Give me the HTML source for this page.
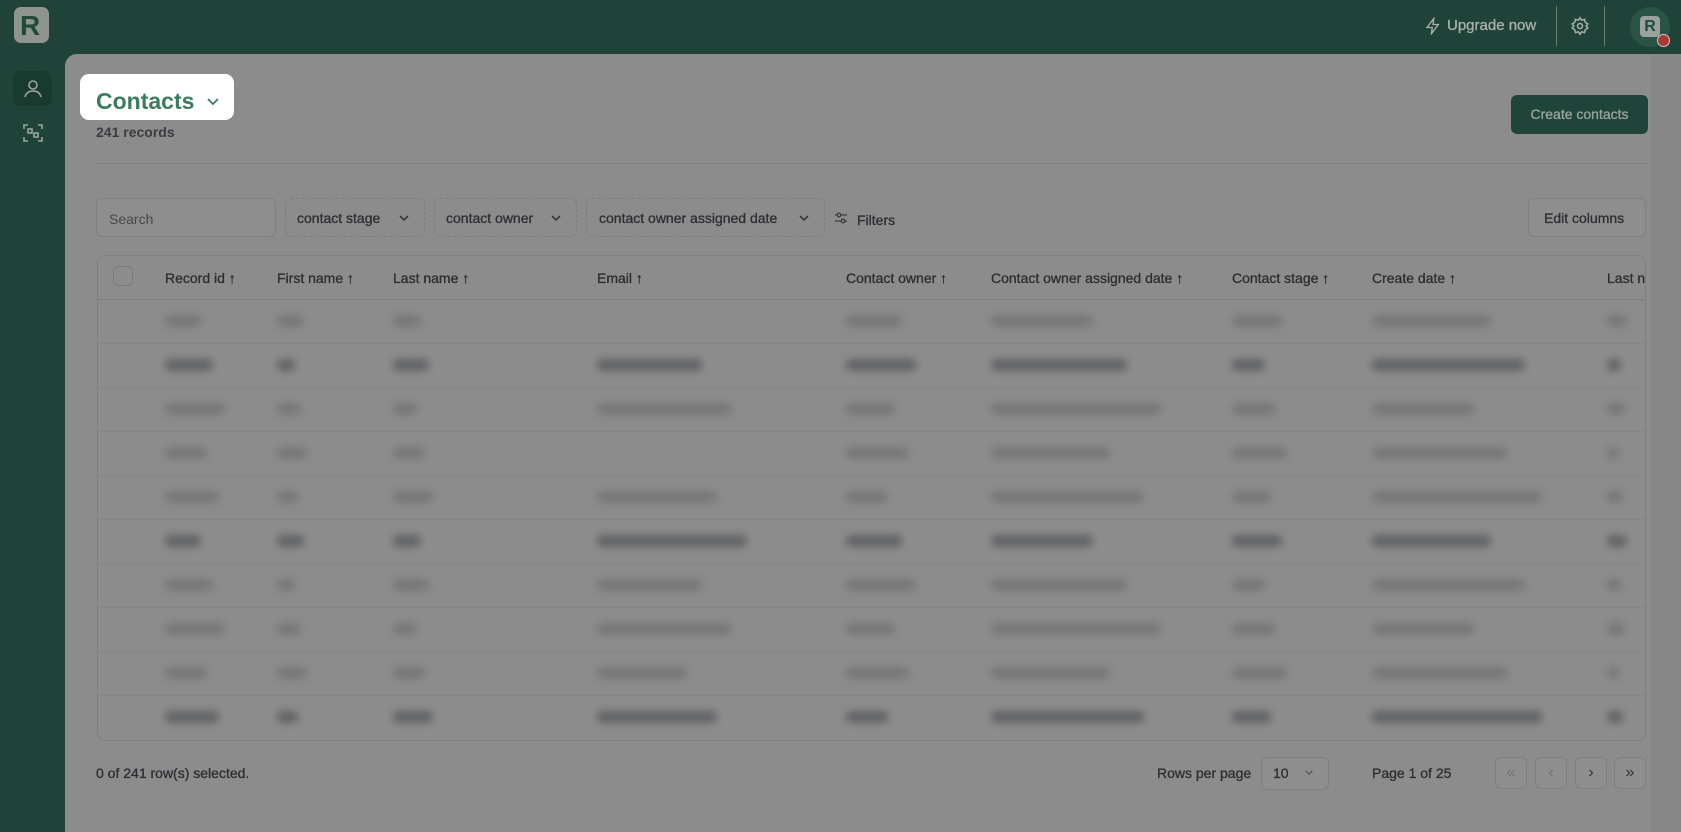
<!DOCTYPE html>
<html><head><meta charset="utf-8"><style>
*{box-sizing:border-box;margin:0;padding:0}
body{width:1681px;height:832px;overflow:hidden;background:#1f4338;font-family:"Liberation Sans",sans-serif;position:relative}
.abs{position:absolute}
.panel{left:65px;top:54px;width:1616px;height:778px;background:#8c8c8c;border-top-left-radius:12px}
.txt{color:#2b2e32;font-size:14px;white-space:nowrap;-webkit-text-stroke:0.3px #2b2e32}
.btn{border:1px solid #7f7f7f;border-radius:6px;background:#8e8e8e}
.dash{border:1px dashed #7d7d7d;border-radius:6px}
.hd{position:absolute;top:270px;font-size:14px;color:#2a2d31;white-space:nowrap;-webkit-text-stroke:0.3px #2a2d31}
</style></head><body>
<div class="abs" style="left:14px;top:7px;width:35px;height:36px;background:#8f9491;border-radius:7px"></div>
<div class="abs" style="left:20px;top:10px;font:bold 28px 'Liberation Sans',sans-serif;color:#1f4a38">R</div>
<div class="abs" style="left:13px;top:71px;width:39px;height:35px;background:#183a2f;border-radius:8px"></div>
<svg class="abs" style="left:21px;top:77px" width="24" height="24" viewBox="0 0 24 24" fill="none" stroke="#9aa59f" stroke-width="1.6"><circle cx="12" cy="8" r="4"/><path d="M4 20c1-4 4-6 8-6s7 2 8 6"/></svg>
<svg class="abs" style="left:21px;top:121px" width="24" height="24" viewBox="0 0 24 24" fill="none" stroke="#9aa59f" stroke-width="1.6"><path d="M3 8V4h4M17 4h4v4M21 16v4h-4M7 20H3v-4"/><rect x="7" y="8" width="4" height="4"/><rect x="13" y="12" width="4" height="4"/></svg>
<svg class="abs" style="left:1424px;top:17px" width="18" height="18" viewBox="0 0 24 24" fill="none" stroke="#a9b1ad" stroke-width="1.8"><path d="M13 2L4 14h7l-1 8 9-12h-7z"/></svg>
<div class="abs" style="left:1447px;top:17px;font-size:15px;color:#a9b1ad;-webkit-text-stroke:0.3px #a9b1ad">Upgrade now</div>
<div class="abs" style="left:1556px;top:6px;width:1px;height:40px;background:#6d7b75"></div>
<svg class="abs" style="left:1570px;top:16px" width="20" height="20" viewBox="0 0 24 24" fill="none" stroke="#a9b1ad" stroke-width="1.8"><circle cx="12" cy="12" r="3"/><path d="M12 2l2 3 3.5-.9.9 3.5 3 2-2 2.4 2 2.4-3 2-.9 3.5-3.5-.9-2 3-2-3-3.5.9-.9-3.5-3-2 2-2.4-2-2.4 3-2 .9-3.5 3.5.9z"/></svg>
<div class="abs" style="left:1604px;top:6px;width:1px;height:40px;background:#6d7b75"></div>
<div class="abs" style="left:1630px;top:7px;width:40px;height:40px;border-radius:50%;background:#2a5546"></div>
<div class="abs" style="left:1640px;top:16px;width:20px;height:21px;background:#9aa29e;border-radius:4px;font:bold 16px 'Liberation Sans';color:#1f4a38;text-align:center;line-height:21px">R</div>
<div class="abs" style="left:1657px;top:34px;width:13px;height:13px;border-radius:50%;background:#a83a34;border:1.5px solid #c9c9c9"></div>
<div class="abs panel"></div>
<div class="abs" style="left:1651px;top:54px;width:30px;height:778px;background:#878787"></div>
<div class="abs" style="left:80px;top:74px;width:154px;height:46px;background:#fff;border-radius:9px"></div>
<div class="abs" style="left:96px;top:88px;font:bold 23px 'Liberation Sans',sans-serif;color:#3a7d5e">Contacts</div>
<svg class="abs" style="left:206px;top:97px" width="14" height="10" viewBox="0 0 14 10" fill="none" stroke="#3a7d5e" stroke-width="1.8"><path d="M2 2l5 5 5-5"/></svg>
<div class="abs" style="left:96px;top:124px;font-size:14px;font-weight:bold;color:#3a3c40">241 records</div>
<div class="abs" style="left:1511px;top:95px;width:137px;height:39px;background:#21443a;border-radius:6px;color:#9aa59f;font-size:14px;text-align:center;line-height:39px;-webkit-text-stroke:0.3px #9aa59f">Create contacts</div>
<div class="abs" style="left:96px;top:163px;width:1551px;height:1px;background:#808080"></div>
<div class="abs btn" style="left:96px;top:198px;width:180px;height:39px"></div>
<div class="abs" style="left:109px;top:211px;color:#46494d;font-size:14px">Search</div>
<div class="abs dash" style="left:285px;top:198px;width:140px;height:39px"></div>
<div class="abs txt" style="left:297px;top:210px">contact stage</div>
<div class="abs dash" style="left:434px;top:198px;width:143px;height:39px"></div>
<div class="abs txt" style="left:446px;top:210px">contact owner</div>
<div class="abs dash" style="left:586px;top:198px;width:239px;height:39px"></div>
<div class="abs txt" style="left:599px;top:210px">contact owner assigned date</div>
<svg class="abs" style="left:398px;top:214px" width="12" height="8" viewBox="0 0 12 8" fill="none" stroke="#2b2e32" stroke-width="1.5"><path d="M2 2l4 4 4-4"/></svg>
<svg class="abs" style="left:550px;top:214px" width="12" height="8" viewBox="0 0 12 8" fill="none" stroke="#2b2e32" stroke-width="1.5"><path d="M2 2l4 4 4-4"/></svg>
<svg class="abs" style="left:798px;top:214px" width="12" height="8" viewBox="0 0 12 8" fill="none" stroke="#2b2e32" stroke-width="1.5"><path d="M2 2l4 4 4-4"/></svg>
<svg class="abs" style="left:834px;top:211px" width="14" height="14" viewBox="0 0 14 14" fill="none" stroke="#3a3c40" stroke-width="1.3"><path d="M1 4h12M1 10h12"/><circle cx="5" cy="4" r="1.8" fill="#8c8c8c"/><circle cx="9" cy="10" r="1.8" fill="#8c8c8c"/></svg>
<div class="abs txt" style="left:857px;top:212px">Filters</div>
<div class="abs btn" style="left:1528px;top:198px;width:118px;height:39px"></div>
<div class="abs txt" style="left:1544px;top:210px">Edit columns</div>
<div class="abs" style="left:97px;top:255px;width:1549px;height:486px;border:1px solid #7f7f7f;border-radius:8px"></div>
<div class="abs" style="left:98px;top:299px;width:1547px;height:1px;background:#7f7f7f"></div>
<div class="abs" style="left:113px;top:266px;width:20px;height:20px;border:1px solid #7a7a7a;border-radius:5px"></div>
<div class="hd" style="left:165px">Record id ↑</div>
<div class="hd" style="left:277px">First name ↑</div>
<div class="hd" style="left:393px">Last name ↑</div>
<div class="hd" style="left:597px">Email ↑</div>
<div class="hd" style="left:846px">Contact owner ↑</div>
<div class="hd" style="left:991px">Contact owner assigned date ↑</div>
<div class="hd" style="left:1232px">Contact stage ↑</div>
<div class="hd" style="left:1372px">Create date ↑</div>
<div class="hd" style="left:1607px;width:38px;overflow:hidden">Last name</div>
<div id="rows"></div>
<div class="abs txt" style="left:96px;top:765px">0 of 241 row(s) selected.</div>
<div class="abs txt" style="left:1157px;top:765px">Rows per page</div>
<div class="abs btn" style="left:1261px;top:757px;width:68px;height:33px"></div>
<div class="abs txt" style="left:1273px;top:765px">10</div>
<svg class="abs" style="left:1304px;top:769px" width="10" height="7" viewBox="0 0 12 8" fill="none" stroke="#555" stroke-width="1.5"><path d="M2 2l4 4 4-4"/></svg>
<div class="abs txt" style="left:1372px;top:765px">Page 1 of 25</div>
<div class="abs btn" style="left:1495px;top:757px;width:32px;height:32px;text-align:center;line-height:30px;color:#707070">«</div>
<div class="abs btn" style="left:1535px;top:757px;width:32px;height:32px;text-align:center;line-height:30px;color:#707070">‹</div>
<div class="abs btn" style="left:1575px;top:757px;width:32px;height:32px;text-align:center;line-height:30px;color:#333">›</div>
<div class="abs btn" style="left:1614px;top:757px;width:32px;height:32px;text-align:center;line-height:30px;color:#333">»</div>
<script>
var cols=[165,277,393,597,846,991,1232,1372,1607];
var w=[60,30,40,150,70,170,55,170,20];
var dark=[0,1,0,0,0,1,0,0,0,1];
var h='';
for(var r=0;r<10;r++){
 var y=299+r*44;
 if(r>0)h+='<div class="abs" style="left:98px;top:'+y+'px;width:1547px;height:1px;background:#858585"></div>';
 for(var c=0;c<cols.length;c++){
  if((r==0||r==3)&&c==3)continue;
  var ww=w[c]*(0.6+((r*7+c*3)%5)/10);
  var op=dark[r]?0.7:0.35;
  h+='<div class="abs" style="left:'+cols[c]+'px;top:'+(y+16)+'px;width:'+ww+'px;height:12px;background:#505256;opacity:'+op+';filter:blur(4px);border-radius:5px"></div>';
 }
}
document.getElementById('rows').innerHTML=h;
</script>
</body></html>
